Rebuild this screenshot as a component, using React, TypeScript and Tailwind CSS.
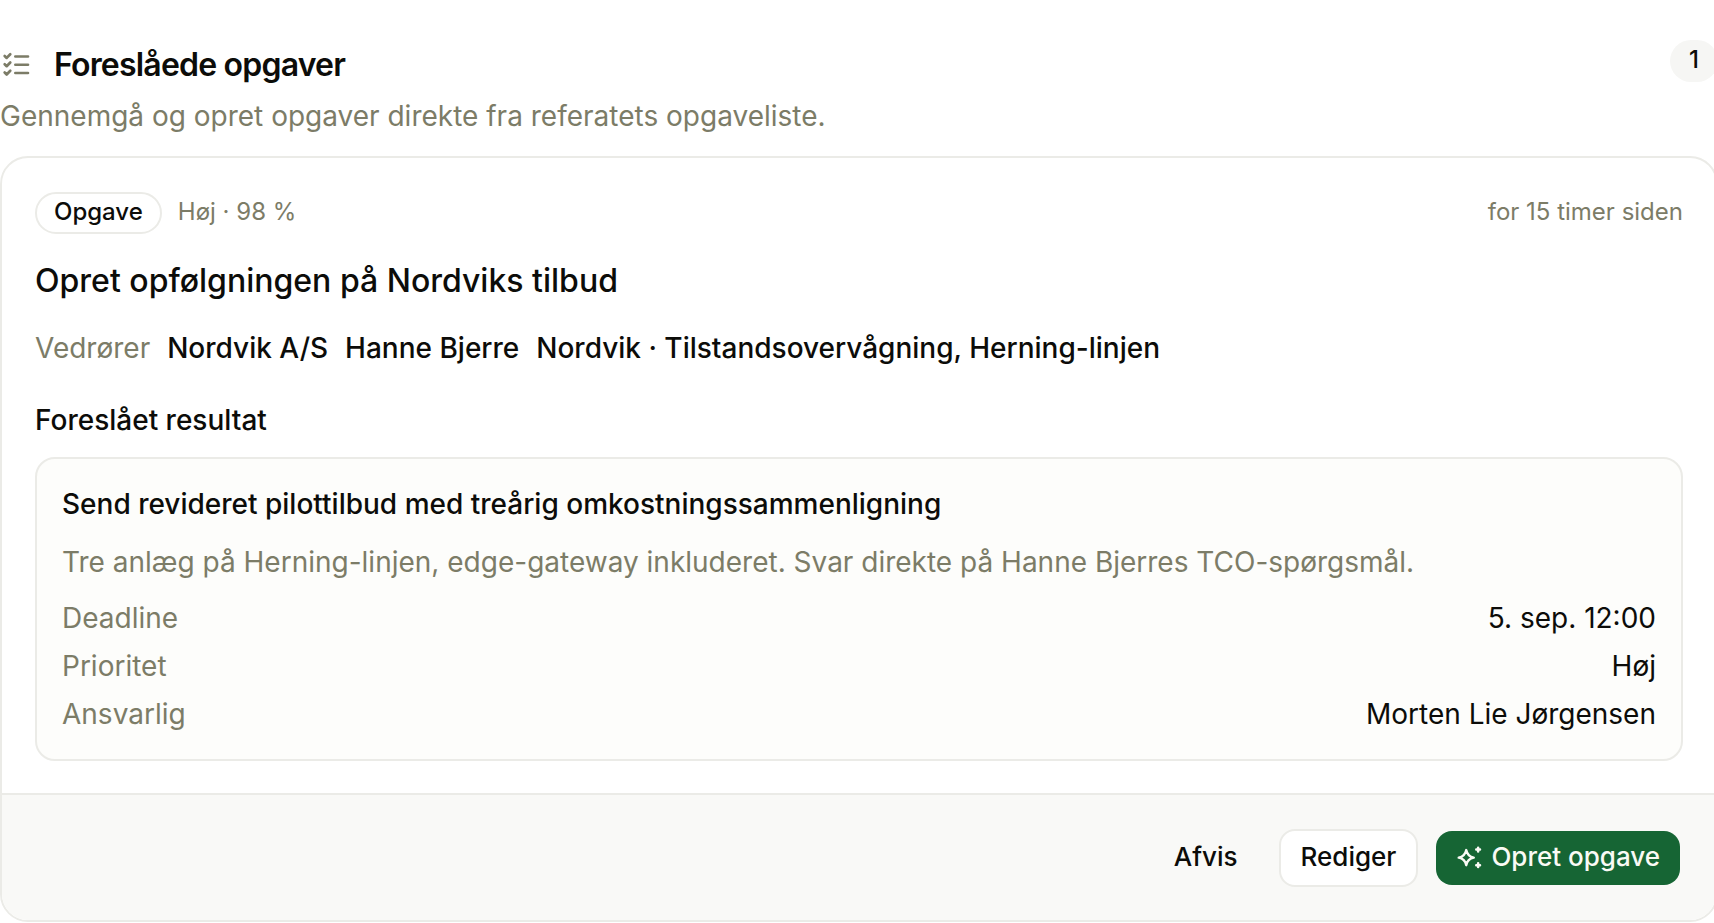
import type { ReactNode } from 'react'

interface Detail {
  label: string
  value: string
}

const details: Detail[] = [
  { label: 'Deadline', value: '5. sep. 12:00' },
  { label: 'Prioritet', value: 'Høj' },
  { label: 'Ansvarlig', value: 'Morten Lie Jørgensen' },
]

const relatedLinks = ['Nordvik A/S', 'Hanne Bjerre', 'Nordvik · Tilstandsovervågning, Herning-linjen']

function TaskListIcon() {
  return (
    <svg
      viewBox="0 0 24 24"
      fill="none"
      stroke="currentColor"
      strokeWidth="2"
      strokeLinecap="round"
      strokeLinejoin="round"
      className="size-8 shrink-0 text-[#7c7c67]"
      aria-hidden="true"
    >
      <path d="M11.5 5.6H21M11.5 11.8H21M11.5 18H21" />
      <path d="M3.5 5.2l1.5 1.5 2.7-2.8M3.5 11.4l1.5 1.5 2.7-2.8M3.5 17.6l1.5 1.5 2.7-2.8" />
    </svg>
  )
}

function SparklesIcon() {
  return (
    <svg
      viewBox="0 0 24 24"
      fill="none"
      stroke="currentColor"
      strokeWidth="2"
      strokeLinecap="round"
      strokeLinejoin="round"
      className="size-[30px] shrink-0"
      aria-hidden="true"
    >
      <path d="M9 6.5q1 5 6 6q-5 1-6 6q-1-5-6-6q5-1 6-6z" />
      <path d="M18.5 4.5v3M17 6h3M18.5 17v3M17 18.5h3" />
    </svg>
  )
}

function DetailRow({ label, value }: Detail) {
  return (
    <div className="flex items-center justify-between gap-6">
      <dt className="text-[#7c7c67]">{label}</dt>
      <dd>{value}</dd>
    </div>
  )
}

function Button({ className, children }: { className: string; children: ReactNode }) {
  return (
    <button type="button" className={`flex items-center rounded-2xl pb-0.5 text-[26px] leading-9 font-medium ${className}`}>
      {children}
    </button>
  )
}

export default function App() {
  return (
    <div className="overflow-hidden bg-white font-[Inter,sans-serif] text-[28px] leading-10 text-[#0c0c09]">
      {/* The section bleeds slightly past the right edge */}
      <section className="-mr-1 pt-10">
        <header>
          <div className="flex items-start justify-between">
            <div className="flex items-center gap-[22px] pt-[5px]">
              <TaskListIcon />
              <h2 className="text-[32px] leading-10 font-semibold tracking-tight">Foreslåede opgaver</h2>
            </div>
            <span className="flex h-[42px] w-12 items-center justify-center rounded-full bg-[#f6f6f4] pb-0.5 text-2xl font-medium">
              1
            </span>
          </div>
          <p className="mt-[11px] text-[#7c7c67]">Gennemgå og opret opgaver direkte fra referatets opgaveliste.</p>
        </header>

        <article className="mt-5 overflow-hidden rounded-[28px] border-2 border-[#ebebe7]">
          <div className="px-[33px] pt-[34px] pb-8">
            <div className="flex items-baseline justify-between text-2xl leading-[30px] text-[#7c7c67]">
              <div className="flex items-baseline gap-4">
                <span className="rounded-full border-2 border-[#ebebe7] px-[17px] pt-[3px] pb-[5px] font-medium text-[#0c0c09]">
                  Opgave
                </span>
                <span>Høj · 98 %</span>
              </div>
              <time>for 15 timer siden</time>
            </div>

            <h3 className="mt-[25px] text-[32px] leading-11 font-medium">Opret opfølgningen på Nordviks tilbud</h3>

            <div className="mt-[25px] flex flex-wrap gap-[17px]">
              <span className="text-[#7c7c67]">Vedrører</span>
              {relatedLinks.map(link => (
                <a key={link} href="#" className="font-medium">
                  {link}
                </a>
              ))}
            </div>

            <h4 className="mt-8 font-medium">Foreslået resultat</h4>

            <div className="mt-[17px] rounded-[20px] border-2 border-[#ebebe7] bg-[#fdfdfb] p-[25px]">
              <p className="font-medium">Send revideret pilottilbud med treårig omkostningssammenligning</p>
              <p className="mt-[18px] text-[#7c7c67]">
                Tre anlæg på Herning-linjen, edge-gateway inkluderet. Svar direkte på Hanne Bjerres TCO-spørgsmål.
              </p>
              <dl className="mt-4 flex flex-col gap-2">
                {details.map(detail => (
                  <DetailRow key={detail.label} {...detail} />
                ))}
              </dl>
            </div>
          </div>

          <footer className="flex items-center justify-end gap-[18px] border-t-2 border-[#ebebe7] bg-[#f9f9f7] px-9 pt-[34px] pb-[33px]">
            <Button className="h-14 px-[23px]">Afvis</Button>
            <Button className="h-[58px] border-2 border-[#ebebe7] bg-white px-5">Rediger</Button>
            <Button className="h-[54px] gap-1.5 bg-[#166534] pr-5 pl-[19px] text-[#fafaf5]">
              <SparklesIcon />
              Opret opgave
            </Button>
          </footer>
        </article>
      </section>
    </div>
  )
}
